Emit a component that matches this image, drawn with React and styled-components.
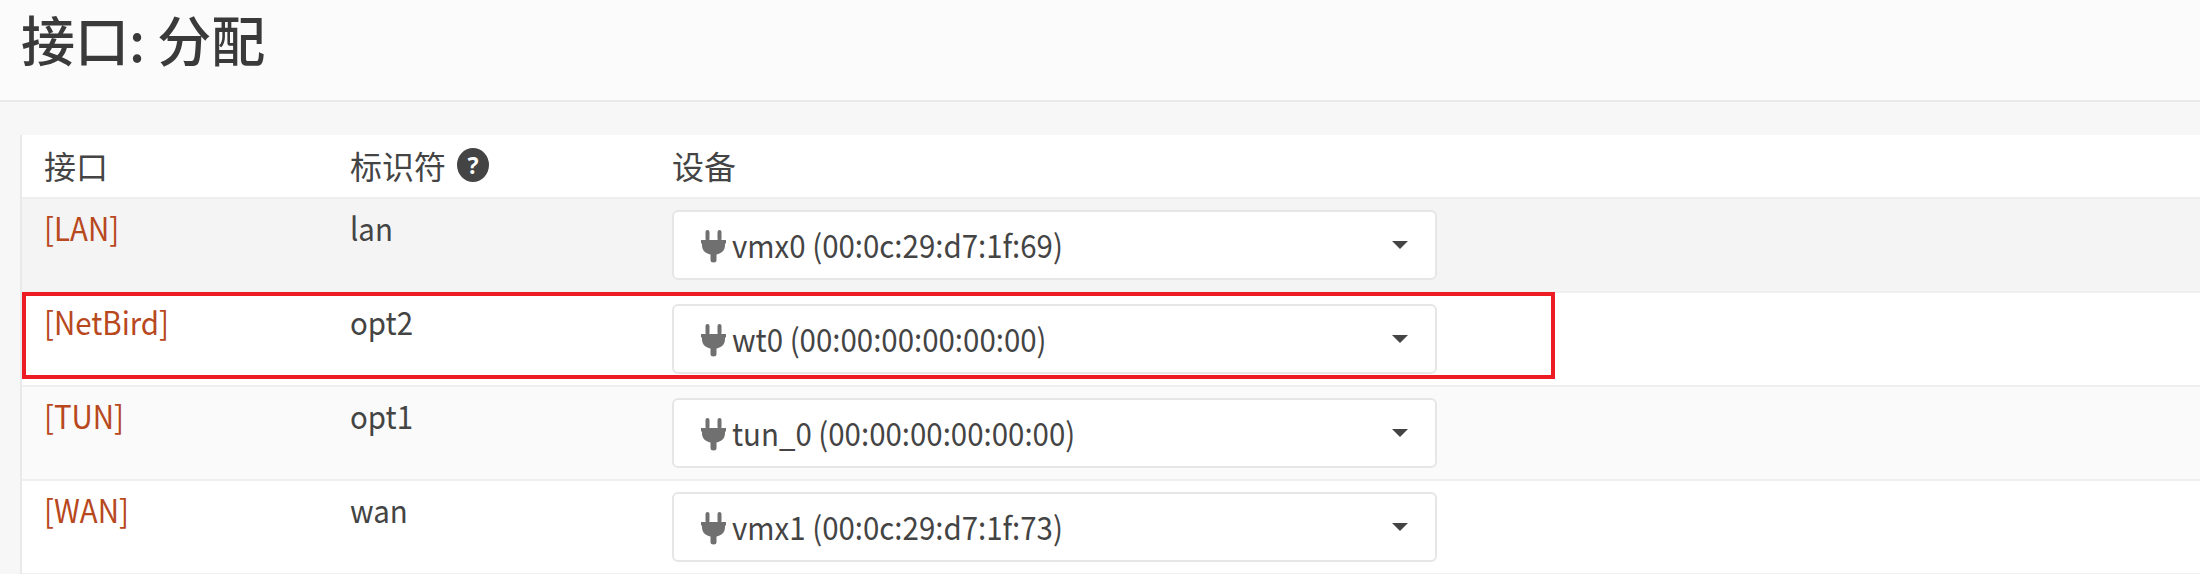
import styled, { createGlobalStyle } from "styled-components";

const GlobalStyle = createGlobalStyle`
    html, body {
        margin: 0;
        padding: 0;
        background: #f7f7f7;
        overflow: hidden;
    }
    body {
        font-family: "Noto Sans CJK SC", "Noto Sans", sans-serif;
        color: #444;
    }
`;

const rows = [
    { name: "[LAN]", id: "lan", device: "vmx0 (00:0c:29:d7:1f:69)", bg: "#f4f4f4" },
    { name: "[NetBird]", id: "opt2", device: "wt0 (00:00:00:00:00:00)", bg: "#ffffff", marked: true },
    { name: "[TUN]", id: "opt1", device: "tun_0 (00:00:00:00:00:00)", bg: "#fafafa" },
    { name: "[WAN]", id: "wan", device: "vmx1 (00:0c:29:d7:1f:73)", bg: "#ffffff" },
];

function Plug() {
    return (
        <PlugIcon width="25" height="33" viewBox="0 0 25 33">
            <rect x="4.500" y="0" width="4" height="11" rx="2" fill="#707070" />
            <rect x="16.500" y="0" width="4" height="11" rx="2" fill="#707070" />
            <path
                d="M0 10h25v3.500h-1v1.500c0 5.500-3.500 8.500-8.500 9.500v5.500a3 2.500 0 0 1-6 0V24.500C4.500 23.500 1 20.500 1 15v-1.500H0z"
                fill="#707070"
            />
        </PlugIcon>
    );
}

export default function App() {
    return (
        <Page>
            <GlobalStyle />
            <TitleBar>
                <Title>接口: 分配</Title>
            </TitleBar>
            <Content>
                <Panel>
                    <HeadRow>
                        <NameCell>接口</NameCell>
                        <IdCell>
                            标识符
                            <HelpIcon>?</HelpIcon>
                        </IdCell>
                        <DeviceCell>设备</DeviceCell>
                    </HeadRow>
                    {rows.map((row) => (
                        <Row key={row.id} $bg={row.bg}>
                            <NameCell>
                                <Latin $link>{row.name}</Latin>
                            </NameCell>
                            <IdCell>
                                <Latin>{row.id}</Latin>
                            </IdCell>
                            <DeviceCell>
                                <Select>
                                    <Plug />
                                    <SelectText>
                                        <Latin>{row.device}</Latin>
                                    </SelectText>
                                    <Caret />
                                </Select>
                            </DeviceCell>
                            {row.marked && <Marker />}
                        </Row>
                    ))}
                </Panel>
            </Content>
        </Page>
    );
}

const Page = styled.div`
    width: 2200px;
    height: 574px;
    overflow: hidden;
`;

const TitleBar = styled.header`
    height: 100px;
    background: #fbfbfb;
    border-bottom: 2px solid #e9e9e9;
    display: flex;
    align-items: flex-start;
    padding-left: 21px;
`;

const Title = styled.h1`
    margin: 0;
    font-size: 54px;
    line-height: 60px;
    padding-top: 9px;
    font-weight: 500;
    color: #3a3a3a;
`;

const Content = styled.main`
    padding: 33px 0 0 20px;
`;

const Panel = styled.div`
    background: #fff;
    border-left: 2px solid #e9e9e9;
`;

const HeadRow = styled.div`
    display: flex;
    height: 64px;
    box-sizing: border-box;
    padding-bottom: 3px;
    border-bottom: 2px solid #efefef;
    font-size: 32px;
    line-height: 40px;
    align-items: center;
`;

const Row = styled.div`
    position: relative;
    display: flex;
    height: 92px;
    border-bottom: 2px solid #efefef;
    background: ${(props) => props.$bg};
    font-size: 32px;
    line-height: 40px;
`;

const NameCell = styled.div`
    width: 306px;
    padding: 8px 0 0 22px;
    ${HeadRow} & {
        padding-top: 0;
    }
`;

const IdCell = styled.div`
    width: 322px;
    padding-top: 8px;
    ${HeadRow} & {
        padding-top: 0;
        display: flex;
        align-items: center;
        gap: 11px;
    }
`;

const DeviceCell = styled.div`
    flex: 1;
    padding-top: 11px;
    ${HeadRow} & {
        padding-top: 0;
    }
`;

const Latin = styled.span`
    display: inline-block;
    transform: scaleX(0.92);
    transform-origin: left center;
    white-space: nowrap;
    color: ${(props) => (props.$link ? "#b8481d" : "inherit")};
`;

const HelpIcon = styled.span`
    width: 32px;
    height: 34px;
    border-radius: 50%;
    background: #444;
    color: #fff;
    font-size: 23px;
    font-weight: 700;
    line-height: 34px;
    text-align: center;
    font-family: "Noto Sans", sans-serif;
`;

const Select = styled.div`
    width: 765px;
    height: 70px;
    box-sizing: border-box;
    background: #fff;
    border: 2px solid #e6e6e6;
    border-radius: 6px;
    display: flex;
    align-items: center;
    padding: 0 25px 0 27px;
    gap: 6px;
    color: #444;
`;

const PlugIcon = styled.svg`
    flex: none;
    margin-top: 2px;
`;

const SelectText = styled.span`
    flex: 1;
    padding-bottom: 3px;
`;

const Caret = styled.span`
    width: 0;
    height: 0;
    margin-right: 2px;
    border-left: 8px solid transparent;
    border-right: 8px solid transparent;
    border-top: 8px solid #444;
`;

const Marker = styled.div`
    position: absolute;
    left: 0;
    top: -1px;
    width: 1533px;
    height: 87px;
    box-sizing: border-box;
    border: 4px solid #ed1c24;
`;
